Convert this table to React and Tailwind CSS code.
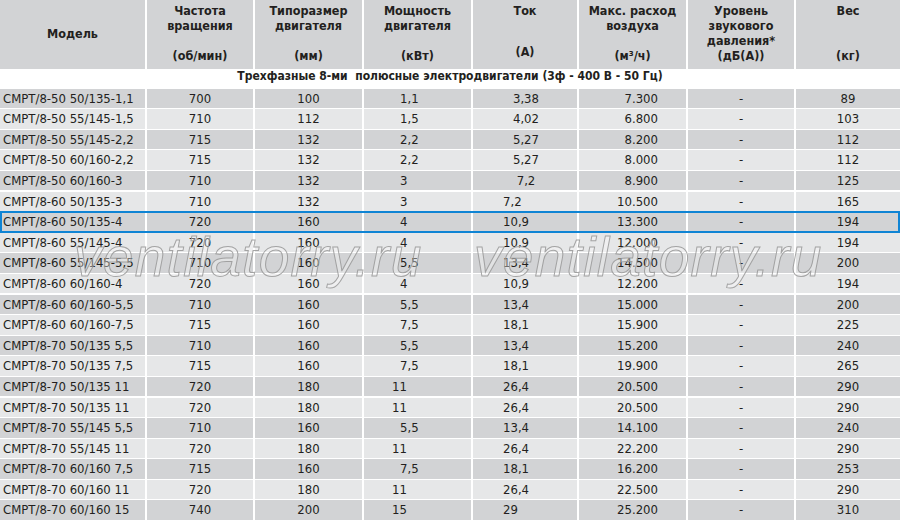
import React from 'react';

const COLS = 'grid grid-cols-[145px_106px_107px_107px_104px_107px_106px_104px] gap-x-[2px]';

// model, rpm, frame, kW, current, airflow, noise, weight
const rows = [
  ['CMPT/8-50 50/135-1,1', '700', '100', '1,1', '3,38', '7.300', '-', '89'],
  ['CMPT/8-50 55/145-1,5', '710', '112', '1,5', '4,02', '6.800', '-', '103'],
  ['CMPT/8-50 55/145-2,2', '715', '132', '2,2', '5,27', '8.200', '-', '112'],
  ['CMPT/8-50 60/160-2,2', '715', '132', '2,2', '5,27', '8.000', '-', '112'],
  ['CMPT/8-50 60/160-3', '710', '132', '3', '7,2', '8.900', '-', '125'],
  ['CMPT/8-60 50/135-3', '710', '132', '3', '7,2', '10.500', '-', '165'],
  ['CMPT/8-60 50/135-4', '720', '160', '4', '10,9', '13.300', '-', '194'],
  ['CMPT/8-60 55/145-4', '720', '160', '4', '10,9', '12.000', '-', '194'],
  ['CMPT/8-60 55/145-5,5', '710', '160', '5,5', '13,4', '14.500', '-', '200'],
  ['CMPT/8-60 60/160-4', '720', '160', '4', '10,9', '12.200', '-', '194'],
  ['CMPT/8-60 60/160-5,5', '710', '160', '5,5', '13,4', '15.000', '-', '200'],
  ['CMPT/8-60 60/160-7,5', '715', '160', '7,5', '18,1', '15.900', '-', '225'],
  ['CMPT/8-70 50/135 5,5', '710', '160', '5,5', '13,4', '15.200', '-', '240'],
  ['CMPT/8-70 50/135 7,5', '715', '160', '7,5', '18,1', '19.900', '-', '265'],
  ['CMPT/8-70 50/135 11', '720', '180', '11', '26,4', '20.500', '-', '290'],
  ['CMPT/8-70 50/135 11', '720', '180', '11', '26,4', '20.500', '-', '290'],
  ['CMPT/8-70 55/145 5,5', '710', '160', '5,5', '13,4', '14.100', '-', '240'],
  ['CMPT/8-70 55/145 11', '720', '180', '11', '26,4', '22.200', '-', '290'],
  ['CMPT/8-70 60/160 7,5', '715', '160', '7,5', '18,1', '16.200', '-', '253'],
  ['CMPT/8-70 60/160 11', '720', '180', '11', '26,4', '22.500', '-', '290'],
  ['CMPT/8-70 60/160 15', '740', '200', '15', '29', '25.200', '-', '310'],
];

const HIGHLIGHT = 6;

function HeadCell({ lines, unit, unitClass = 'pb-[6px]' }) {
  return (
    <div className="bg-[#d2d3d5] flex flex-col items-center justify-between text-center pt-[3px]">
      <div className="leading-[15px]">
        {lines.map(l => <div key={l}>{l}</div>)}
      </div>
      <div className={`leading-[15px] ${unitClass}`}>{unit}</div>
    </div>
  );
}

function DataRow({ row, index }) {
  const bg = index % 2 === 0 ? 'bg-[#d2d3d5]' : 'bg-[#e6e7e8]';
  const [model, rpm, frame, kw, amp, air, noise, weight] = row;
  const kwPad = kw.length === 2 ? 'pl-[28px]' : 'pl-[36px]';
  const ampCls = index < 5 ? 'justify-center pl-[2px]' : 'pl-[30px]';
  const cell = `${bg} flex items-center`;

  return (
    <div className={`relative mt-[1.6px] h-[19px] ${COLS}`}>
      <div className={`${cell} pl-[3px] whitespace-nowrap`}>{model}</div>
      <div className={`${cell} justify-center`}>{rpm}</div>
      <div className={`${cell} justify-center`}>{frame}</div>
      <div className={`${cell} ${kwPad}`}>{kw}</div>
      <div className={`${cell} ${ampCls}`}>{amp}</div>
      <div className={`${cell} justify-end pr-[28px]`}>{air}</div>
      <div className={`${cell} justify-center`}>{noise}</div>
      <div className={`${cell} justify-center`}>{weight}</div>
      {index === HIGHLIGHT && (
        <div className="absolute inset-x-0 -top-[1.5px] -bottom-[2px] border-2 border-[#0f84d4] pointer-events-none" />
      )}
    </div>
  );
}

// semi-transparent outlined site stamp over the table
function Watermark({ className }) {
  return (
    <div
      className={`absolute italic text-[55px] leading-none tracking-[1.3px] text-[rgba(255,255,255,0.35)] pointer-events-none select-none ${className}`}
      style={{ fontFamily: '"Liberation Sans", Arial, sans-serif', WebkitTextStroke: '1px rgba(150,150,150,0.85)' }}
    >
      ventilatorry.ru
    </div>
  );
}

export default function App() {
  return (
    <div
      className="relative w-[900px] h-[524px] bg-white overflow-hidden text-[#231f20] text-[13px] font-stretch-condensed"
      style={{ fontFamily: '"DejaVu Sans Condensed", "Liberation Sans Narrow", Roboto, sans-serif' }}
    >
      {/* header */}
      <div className={`h-[65px] font-bold text-[12.5px] ${COLS}`}>
        <div className="bg-[#d2d3d5] flex items-center justify-center">Модель</div>
        <HeadCell lines={['Частота', 'вращения']} unit="(об/мин)" />
        <HeadCell lines={['Типоразмер', 'двигателя']} unit="(мм)" />
        <HeadCell lines={['Мощность', 'двигателя']} unit="(кВт)" />
        <HeadCell lines={['Ток']} unit="(А)" unitClass="pb-[10px]" />
        <HeadCell lines={['Макс. расход', 'воздуха']} unit="(м³/ч)" />
        <HeadCell lines={['Уровень', 'звукового', 'давления*']} unit="(дБ(А))" />
        <HeadCell lines={['Вес']} unit="(кг)" />
      </div>

      {/* section title */}
      <div className="h-[22px] flex items-center justify-center font-bold text-[12px] whitespace-pre">
        Трехфазные 8-ми  полюсные электродвигатели (3ф - 400 В - 50 Гц)
      </div>

      {rows.map((row, i) => (
        <DataRow key={i} row={row} index={i} />
      ))}

      <Watermark className="left-[74px] top-[230px]" />
      <Watermark className="left-[474px] top-[230px]" />
    </div>
  );
}
